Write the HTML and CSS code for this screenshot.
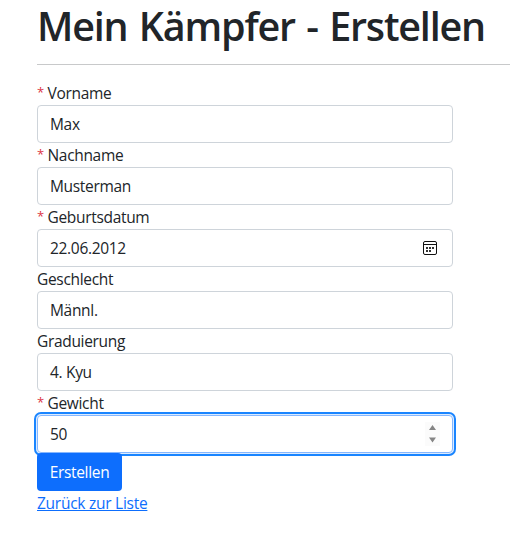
FILE: index.html
```html
<!DOCTYPE html>
<html lang="de">
<head>
<meta charset="utf-8">
<title>Mein Kämpfer - Erstellen</title>
<link rel="stylesheet" href="styles.css">
</head>
<body>
<main class="page">
  <h1 class="title">Mein Kämpfer - Erstellen</h1>
  <hr class="rule">
  <form class="form">
    <label class="label"><span class="required">*</span>Vorname</label>
    <div class="control">Max</div>
    <label class="label"><span class="required">*</span>Nachname</label>
    <div class="control">Musterman</div>
    <label class="label"><span class="required">*</span>Geburtsdatum</label>
    <div class="control">22.06.2012
      <svg class="calendar" width="14" height="14" viewBox="0 0 14 14" fill="none" stroke="#111"><rect x=".5" y=".5" width="13" height="13" rx="1.5"/><path d="M1 3.5H13"/><path d="M3 7H5M6 7H8M9 7H11M3 10H5M6 10H8" stroke="#333" stroke-width="2"/></svg>
    </div>
    <label class="label">Geschlecht</label>
    <div class="control">Männl.</div>
    <label class="label">Graduierung</label>
    <div class="control">4. Kyu</div>
    <label class="label"><span class="required">*</span>Gewicht</label>
    <div class="control focused">50
      <svg class="spinner" width="15" height="24" viewBox="0 0 15 24"><path d="M0 0h15v24H0z" fill="#fbfbfb"/><path d="M7.5 3L11 8H4zM7.5 20.500L11 15.500H4z" fill="#858585"/></svg>
    </div>
    <button class="submit" type="button">Erstellen</button>
  </form>
  <a class="back" href="#">Zurück zur Liste</a>
</main>
</body>
</html>
```

FILE: styles.css
```css
* { box-sizing: border-box; }
body { margin: 0; background: #fff; color: #212529; font: 15.5px/24px "Open Sans", "Noto Sans", sans-serif; letter-spacing: -0.32px; }
.page { padding: 2px 0 0 37px; }
.title { margin: 0 0 14px; font-size: 39.5px; line-height: 48px; font-weight: 600; letter-spacing: -1.2px; word-spacing: 2.3px; white-space: nowrap; }
.rule { height: 1px; margin: 0 0 16px; border: 0; background: #c8c9ca; }
.form { width: 416px; }
.label { display: block; height: 24px; padding-top: 1px; line-height: 23px; }
.required { position: relative; top: -2px; display: inline-block; width: 10.5px; color: #dc3545; font-size: 13px; }
.control { display: flex; align-items: center; justify-content: space-between; height: 38px; padding: 0 15px 0 12px; border: 1px solid #ced4da; border-radius: 4px; }
.focused { border-color: #86b7fe; outline: 2px solid #1a85ff; outline-offset: 1px; box-shadow: 0 0 0 1px #dcebff; }
.spinner { margin-right: -3px; }
.submit { position: relative; display: block; width: 85px; height: 38px; padding: 0; border: 0; border-radius: 4px; background: #0d6efd; color: #fff; font: inherit; letter-spacing: inherit; }
.back { color: #0d6efd; letter-spacing: -0.26px; }
```
